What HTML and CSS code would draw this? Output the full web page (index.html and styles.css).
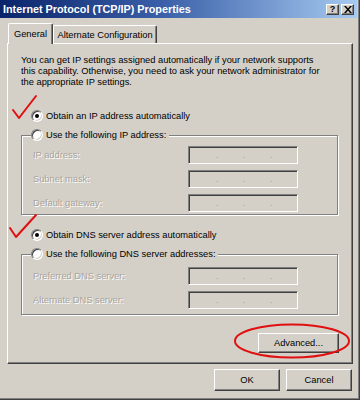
FILE: index.html
```html
<!DOCTYPE html>
<html>
<head>
<meta charset="utf-8">
<link rel="stylesheet" href="styles.css">
</head>
<body>
<div class="window">
  <div class="titlebar">
    <span class="title">Internet Protocol (TCP/IP) Properties</span>
    <div class="tb-buttons">
      <span class="tb-btn help">?</span>
      <span class="tb-btn close"><svg width="8" height="7" viewBox="0 0 8 7"><path d="M0 0h2l2 2.5L6 0h2L5 3.5 8 7H6L4 4.5 2 7H0l3-3.5z" fill="#000"/></svg></span>
    </div>
  </div>
  <div class="client">
    <div class="tabs">
      <div class="tab active">General</div>
      <div class="tab alt">Alternate Configuration</div>
    </div>
    <div class="panel">
      <p class="intro">You can get IP settings assigned automatically if your network supports<br>this capability. Otherwise, you need to ask your network administrator for<br>the appropriate IP settings.</p>
      <div class="option opt-ip"><span class="radio checked"></span>Obtain an IP address automatically</div>
      <div class="group group-ip">
        <div class="group-head"><span class="radio"></span>Use the following IP address:</div>
        <div class="field first"><span class="label">IP address:</span><span class="ipbox"><i>.</i><i>.</i><i>.</i></span></div>
        <div class="field"><span class="label">Subnet mask:</span><span class="ipbox"><i>.</i><i>.</i><i>.</i></span></div>
        <div class="field"><span class="label">Default gateway:</span><span class="ipbox"><i>.</i><i>.</i><i>.</i></span></div>
      </div>
      <div class="option opt-dns"><span class="radio checked"></span>Obtain DNS server address automatically</div>
      <div class="group group-dns">
        <div class="group-head"><span class="radio"></span>Use the following DNS server addresses:</div>
        <div class="field first"><span class="label">Preferred DNS server:</span><span class="ipbox"><i>.</i><i>.</i><i>.</i></span></div>
        <div class="field"><span class="label">Alternate DNS server:</span><span class="ipbox"><i>.</i><i>.</i><i>.</i></span></div>
      </div>
      <div class="adv-row"><button class="btn adv">Advanced...</button></div>
    </div>
    <div class="footer">
      <button class="btn dlg">OK</button>
      <button class="btn dlg">Cancel</button>
    </div>
  </div>
  <svg class="marks" width="360" height="400" viewBox="0 0 360 400">
    <path d="M13 110 L19 118 L36 96" fill="none" stroke="#e01010" stroke-width="2" stroke-linejoin="round" stroke-linecap="round"/>
    <path d="M10 228 L16 237 L36 215" fill="none" stroke="#e01010" stroke-width="2" stroke-linejoin="round" stroke-linecap="round"/>
    <ellipse cx="292" cy="341" rx="57" ry="16.5" fill="none" stroke="#e01010" stroke-width="2"/>
  </svg>
</div>
</body>
</html>
```

FILE: styles.css
```css
* { box-sizing: border-box; }
html, body { margin: 0; padding: 0; }
body {
  background: #d4d0c8;
  font-family: "Liberation Sans", Arial, sans-serif;
  font-size: 9.3px;
  color: #000;
}
.window {
  position: relative;
  width: 360px;
  height: 400px;
  background: #d4d0c8;
  border-right: 1px solid #404040;
  border-bottom: 1px solid #404040;
  box-shadow: inset -1px -1px 0 #808080;
  overflow: hidden;
}
.titlebar {
  height: 18px;
  margin-right: 2px;
  background: linear-gradient(to right, #0a246a 0%, #3a5fa8 45%, #a6caf0 100%);
  display: flex;
  align-items: center;
  justify-content: space-between;
  padding: 0 3px 0 3px;
}
.title {
  color: #fff;
  font-weight: bold;
  font-size: 10.8px;
  white-space: nowrap;
}
.tb-buttons { display: flex; gap: 2px; }
.tb-btn {
  width: 13px;
  height: 11px;
  background: #d4d0c8;
  border-top: 1px solid #fff;
  border-left: 1px solid #fff;
  border-right: 1px solid #404040;
  border-bottom: 1px solid #404040;
  box-shadow: inset -1px -1px 0 #808080;
  display: flex;
  align-items: center;
  justify-content: center;
  font-weight: bold;
  font-size: 9px;
  line-height: 1;
}
.client {
  padding: 5px 5px 0 7px;
}
.tabs {
  display: flex;
  align-items: flex-end;
  height: 20px;
  padding-left: 1px;
  position: relative;
  z-index: 1;
}
.tab {
  height: 18px;
  display: flex;
  align-items: center;
  justify-content: center;
  border-top: 1px solid #fff;
  border-left: 1px solid #fff;
  border-right: 1px solid #404040;
  box-shadow: inset -1px 0 0 #808080;
  border-radius: 2px 2px 0 0;
  background: #d4d0c8;
  white-space: nowrap;
}
.tab.active {
  width: 45px;
  height: 21px;
  margin-bottom: -1px;
  padding-bottom: 1px;
}
.tab.alt { width: 104px; }
.panel {
  width: 346px;
  height: 321px;
  border-top: 1px solid #fff;
  border-left: 1px solid #fff;
  border-right: 1px solid #404040;
  border-bottom: 1px solid #404040;
  box-shadow: inset -1px -1px 0 #808080;
  padding: 11px 13px 0 13px;
}
.intro {
  margin: 0;
  line-height: 11px;
  white-space: nowrap;
}
.option, .group-head {
  display: flex;
  align-items: center;
  height: 12px;
  white-space: nowrap;
}
.option { padding-left: 10px; }
.opt-ip { margin-top: 22px; }
.opt-dns { margin-top: 14px; }
.radio {
  width: 12px;
  height: 12px;
  border-radius: 50%;
  background: #fff;
  border: 1px solid #808080;
  border-right-color: #fff;
  border-bottom-color: #fff;
  box-shadow: inset 1px 1px 0 #404040, inset -1px -1px 0 #d4d0c8;
  margin-right: 3px;
  flex: none;
  position: relative;
}
.radio.checked::after {
  content: "";
  position: absolute;
  left: 3px;
  top: 3px;
  width: 4px;
  height: 4px;
  border-radius: 50%;
  background: #000;
}
.group {
  border: 1px solid #808080;
  box-shadow: inset 1px 1px 0 #fff, 1px 1px 0 #fff;
  width: 317px;
  padding: 0 0 2px 11px;
}
.group-ip { margin-top: 13px; }
.group-dns { margin-top: 13px; padding-bottom: 5px; }
.group-head {
  width: max-content;
  margin: -7px 0 0 -2px;
  background: #d4d0c8;
  padding-right: 3px;
  position: relative;
}
.field {
  display: flex;
  align-items: center;
  height: 18px;
  margin-top: 6px;
}
.field.first { margin-top: 5px; }
.group-dns .field.first { margin-top: 7px; }
.label {
  width: 155px;
  color: #a8a49c;
  text-shadow: 1px 1px 0 #fff;
  white-space: nowrap;
}
.ipbox {
  width: 110px;
  height: 18px;
  border-top: 1px solid #808080;
  border-left: 1px solid #808080;
  border-right: 1px solid #fff;
  border-bottom: 1px solid #fff;
  box-shadow: inset 1px 1px 0 #404040, inset -1px -1px 0 #d4d0c8;
  background: #d4d0c8;
  display: flex;
  padding-left: 27px;
}
.ipbox i {
  font-style: normal;
  color: #a8a49c;
  width: 27px;
  line-height: 16px;
}
.adv-row {
  display: flex;
  justify-content: flex-end;
  margin-top: 18px;
}
.btn {
  font-family: inherit;
  font-size: 9.3px;
  color: #000;
  background: #d4d0c8;
  border-top: 1px solid #fff;
  border-left: 1px solid #fff;
  border-right: 1px solid #404040;
  border-bottom: 1px solid #404040;
  box-shadow: inset -1px -1px 0 #808080;
  padding: 0;
  margin: 0;
  border-radius: 0;
}
.adv { width: 81px; height: 20px; }
.footer {
  display: flex;
  justify-content: flex-end;
  gap: 6px;
  margin-top: 5px;
  padding-right: 2px;
}
.dlg { width: 66px; height: 22px; }
.marks {
  position: absolute;
  left: 0;
  top: 0;
  pointer-events: none;
}
```
